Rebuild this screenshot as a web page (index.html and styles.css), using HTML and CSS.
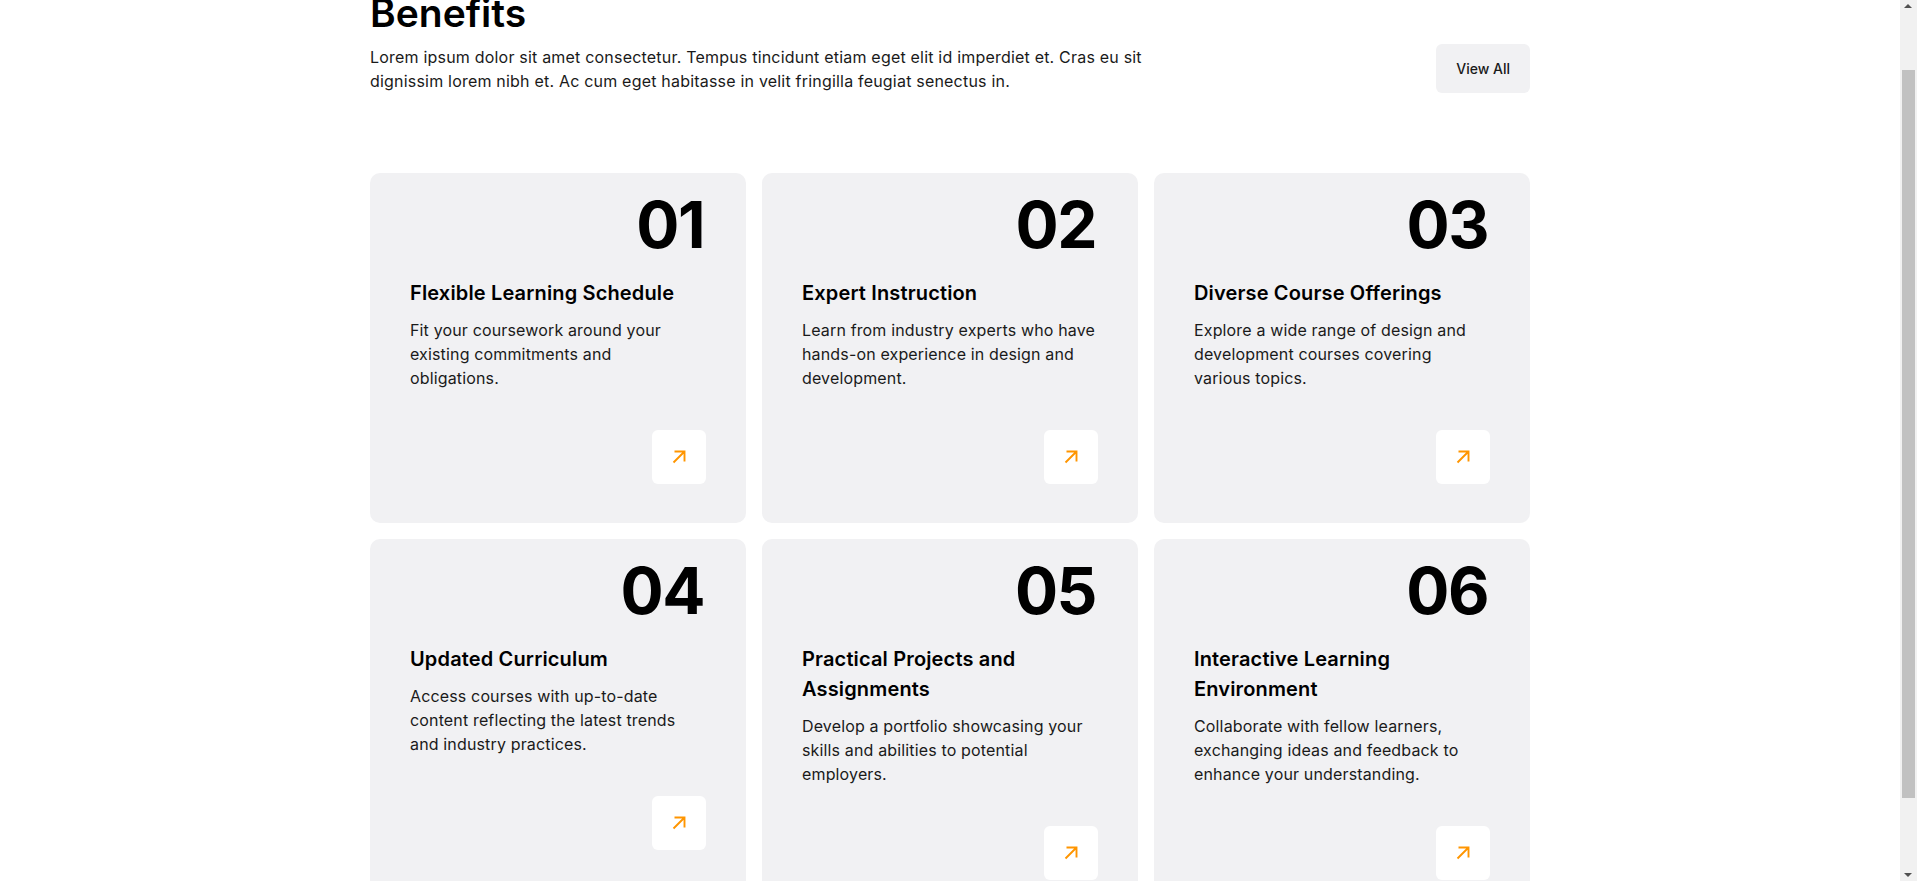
FILE: index.html
```html
<!DOCTYPE html>
<html lang="en">
<head>
<meta charset="utf-8">
<title>Benefits</title>
<link rel="stylesheet" href="styles.css">
</head>
<body>
<section class="benefits">
  <div class="container">
    <div class="head">
      <div class="head-text">
        <h2 class="title">Benefits</h2>
        <p class="lead">Lorem ipsum dolor sit amet consectetur. Tempus tincidunt etiam eget elit id imperdiet et. Cras eu sit dignissim lorem nibh et. Ac cum eget habitasse in velit fringilla feugiat senectus in.</p>
      </div>
      <a class="btn-view" href="#">View All</a>
    </div>
    <div class="grid">
      <article class="card">
        <div class="num">01</div>
        <h3 class="card-title">Flexible Learning Schedule</h3>
        <p class="card-text">Fit your coursework around your<br>existing commitments and<br>obligations.</p>
        <a class="arrow" href="#"><svg viewBox="0 0 14 14" width="14" height="14"><path d="M1.5 12.5 L12 2 M2.5 1.5 H12.5 V11.5" fill="none" stroke="#FF9500" stroke-width="1.9"/></svg></a>
      </article>
      <article class="card">
        <div class="num">02</div>
        <h3 class="card-title">Expert Instruction</h3>
        <p class="card-text">Learn from industry experts who have<br>hands-on experience in design and<br>development.</p>
        <a class="arrow" href="#"><svg viewBox="0 0 14 14" width="14" height="14"><path d="M1.5 12.5 L12 2 M2.5 1.5 H12.5 V11.5" fill="none" stroke="#FF9500" stroke-width="1.9"/></svg></a>
      </article>
      <article class="card">
        <div class="num">03</div>
        <h3 class="card-title">Diverse Course Offerings</h3>
        <p class="card-text">Explore a wide range of design and<br>development courses covering<br>various topics.</p>
        <a class="arrow" href="#"><svg viewBox="0 0 14 14" width="14" height="14"><path d="M1.5 12.5 L12 2 M2.5 1.5 H12.5 V11.5" fill="none" stroke="#FF9500" stroke-width="1.9"/></svg></a>
      </article>
      <article class="card">
        <div class="num">04</div>
        <h3 class="card-title">Updated Curriculum</h3>
        <p class="card-text">Access courses with up-to-date<br>content reflecting the latest trends<br>and industry practices.</p>
        <a class="arrow" href="#"><svg viewBox="0 0 14 14" width="14" height="14"><path d="M1.5 12.5 L12 2 M2.5 1.5 H12.5 V11.5" fill="none" stroke="#FF9500" stroke-width="1.9"/></svg></a>
      </article>
      <article class="card">
        <div class="num">05</div>
        <h3 class="card-title">Practical Projects and Assignments</h3>
        <p class="card-text">Develop a portfolio showcasing your<br>skills and abilities to potential<br>employers.</p>
        <a class="arrow" href="#"><svg viewBox="0 0 14 14" width="14" height="14"><path d="M1.5 12.5 L12 2 M2.5 1.5 H12.5 V11.5" fill="none" stroke="#FF9500" stroke-width="1.9"/></svg></a>
      </article>
      <article class="card">
        <div class="num">06</div>
        <h3 class="card-title">Interactive Learning Environment</h3>
        <p class="card-text">Collaborate with fellow learners,<br>exchanging ideas and feedback to<br>enhance your understanding.</p>
        <a class="arrow" href="#"><svg viewBox="0 0 14 14" width="14" height="14"><path d="M1.5 12.5 L12 2 M2.5 1.5 H12.5 V11.5" fill="none" stroke="#FF9500" stroke-width="1.9"/></svg></a>
      </article>
    </div>
  </div>
</section>
<div class="scrollbar" aria-hidden="true">
  <span class="sb-up"></span>
  <span class="sb-thumb"></span>
  <span class="sb-down"></span>
</div>
<script src="script.js"></script>
</body>
</html>
```

FILE: styles.css
```css
html {
  overflow-y: scroll;
}
body {
  margin: 0;
  padding-right: 17px;
  background: #ffffff;
  font-family: Inter, "Noto Sans", sans-serif;
  color: #262626;
}
.benefits {
  padding: 53px 0 42px;
}
.container {
  max-width: 1160px;
  margin: 0 auto;
}
.head {
  display: flex;
  justify-content: space-between;
  align-items: flex-end;
  gap: 40px;
}
.head-text {
  max-width: 800px;
}
.title {
  margin: 0 0 8px;
  font-size: 39px;
  line-height: 48px;
  font-weight: 600;
  color: #000;
}
.lead {
  margin: 0;
  font-size: 16px;
  line-height: 24px;
  letter-spacing: 0.2px;
  color: #1a1a1a;
}
.btn-view {
  display: block;
  padding: 14px 20px;
  background: #F1F1F3;
  border-radius: 6px;
  font-size: 14px;
  line-height: 21px;
  font-weight: 500;
  color: #1a1a1a;
  text-decoration: none;
}
.grid {
  margin-top: 80px;
  display: grid;
  grid-template-columns: repeat(3, 1fr);
  gap: 16px;
}
.card {
  display: flex;
  flex-direction: column;
  padding: 20px 40px 39px;
  background: #F1F1F3;
  border-radius: 10px;
}
.num {
  align-self: flex-end;
  margin-right: 2px;
  font-size: 64px;
  line-height: 64px;
  font-weight: 700;
  letter-spacing: -1.5px;
  color: #000;
}
.card-title {
  margin: 21px 0 10px;
  font-size: 20px;
  line-height: 30px;
  font-weight: 600;
  letter-spacing: 0.15px;
  color: #000;
}
.card-text {
  margin: 0;
  font-size: 16px;
  line-height: 24px;
  letter-spacing: 0.15px;
  white-space: nowrap;
  color: #1a1a1a;
}
.arrow {
  align-self: flex-end;
  margin-top: 40px;
  width: 54px;
  height: 54px;
  display: flex;
  align-items: center;
  justify-content: center;
  background: #fff;
  border-radius: 6px;
}
.arrow svg {
  display: block;
}
.scrollbar {
  position: fixed;
  top: 0;
  right: 0;
  width: 17px;
  height: 100vh;
  background: #F1F1F1;
}
.sb-up,
.sb-down {
  position: absolute;
  left: 4px;
  width: 0;
  height: 0;
  border-left: 4.5px solid transparent;
  border-right: 4.5px solid transparent;
}
.sb-up {
  top: 4px;
  border-bottom: 4px solid #505050;
}
.sb-down {
  bottom: 4px;
  border-top: 4px solid #505050;
}
.sb-thumb {
  position: absolute;
  top: 70px;
  left: 2px;
  width: 13px;
  height: 728px;
  background: #C1C1C1;
}
```

FILE: script.js
```js
window.scrollTo(0, 64);
```
